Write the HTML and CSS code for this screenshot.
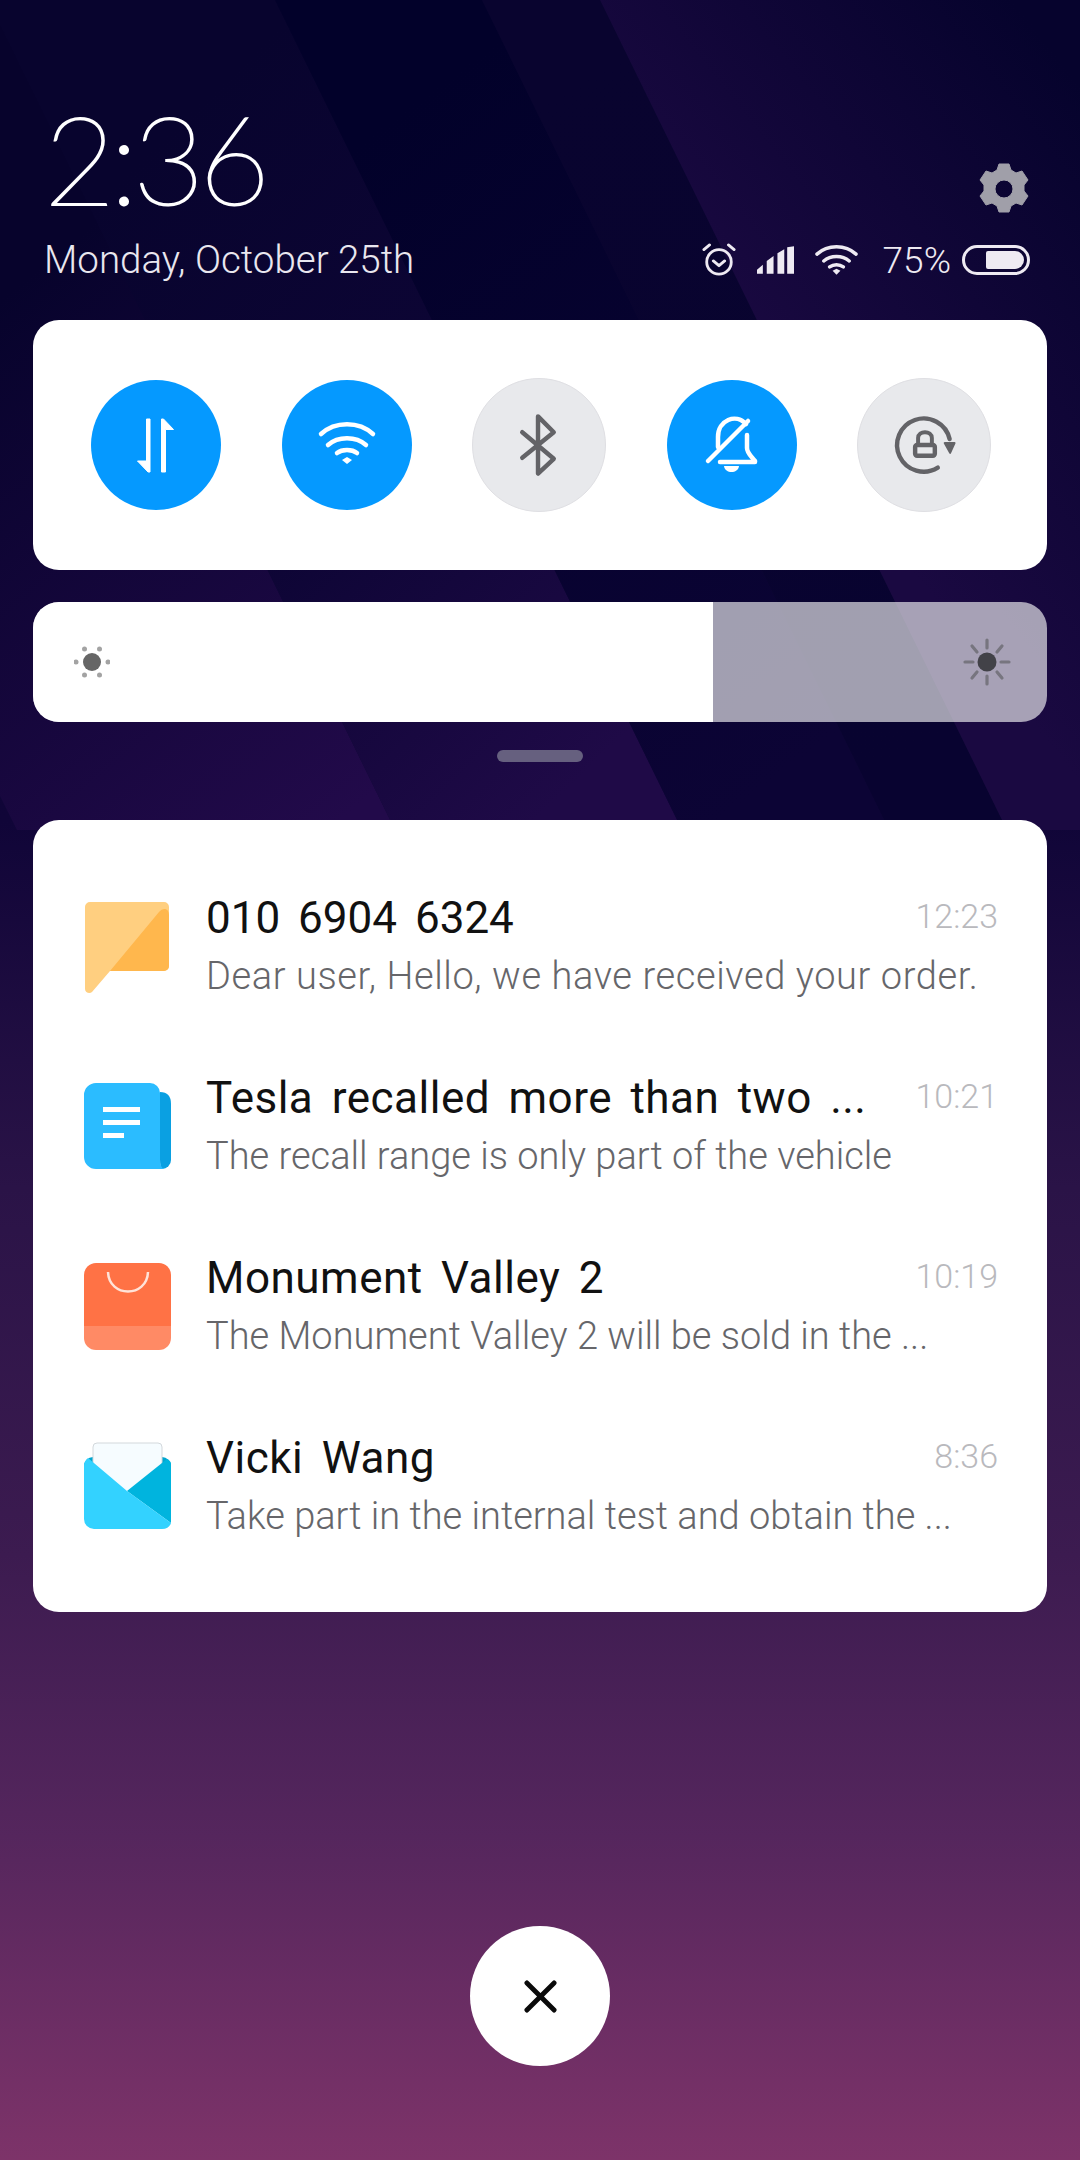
FILE: index.html
```html
<!DOCTYPE html>
<html lang="en">
<head>
  <meta charset="UTF-8">
  <title>Notification shade</title>
  <link rel="stylesheet" href="styles.css">
</head>
<body>
<div class="screen">
  <svg class="wallpaper" viewBox="0 0 1080 2160">
    <defs>
      <linearGradient id="bandOne" gradientUnits="userSpaceOnUse" x1="0" y1="300" x2="390" y2="780">
        <stop offset="0" stop-color="#07032c"/>
        <stop offset="1" stop-color="#220a4a"/>
      </linearGradient>
      <linearGradient id="bandTwo" gradientUnits="userSpaceOnUse" x1="120" y1="180" x2="640" y2="720">
        <stop offset="0" stop-color="#08042e"/>
        <stop offset="0.5" stop-color="#0d0535"/>
        <stop offset="1" stop-color="#1f0a47"/>
      </linearGradient>
      <linearGradient id="bandThree" gradientUnits="userSpaceOnUse" x1="350" y1="150" x2="800" y2="760">
        <stop offset="0" stop-color="#02012a"/>
        <stop offset="1" stop-color="#0c0435"/>
      </linearGradient>
      <linearGradient id="bandFour" gradientUnits="userSpaceOnUse" x1="540" y1="100" x2="900" y2="760">
        <stop offset="0" stop-color="#09042f"/>
        <stop offset="1" stop-color="#080330"/>
      </linearGradient>
      <linearGradient id="bandFive" gradientUnits="userSpaceOnUse" x1="720" y1="330" x2="1060" y2="60">
        <stop offset="0" stop-color="#1a0941"/>
        <stop offset="1" stop-color="#06032d"/>
      </linearGradient>
    </defs>
    <polygon points="0,24 395,830 17,830 0,796" fill="url(#bandOne)"/>
    <polygon points="-12,0 275,0 682,830 395,830" fill="url(#bandTwo)"/>
    <polygon points="275,0 482,0 889,830 682,830" fill="url(#bandThree)"/>
    <polygon points="482,0 600,0 1007,830 889,830" fill="url(#bandFour)"/>
    <polygon points="600,0 1080,0 1080,830 1007,830" fill="url(#bandFive)"/>
  </svg>

  <header class="head">
    <div class="head-left">
      <div class="clock">2:36</div>
      <div class="date">Monday, October 25th</div>
    </div>
    <div class="head-right">
      <svg class="gear" viewBox="0 0 52 52">
        <path fill="#a09fa9" fill-rule="evenodd" stroke="#a09fa9" stroke-width="1" stroke-linejoin="round" d="M21 1h10l2 6 5 3 6-2 6 9-4 5v6l4 5-6 9-6-2-5 3-2 6H21l-2-6-5-3-6 2-6-9 4-5v-6l-4-5 6-9 6 2 5-3zM26 17a9 9 0 1 0 0 18 9 9 0 0 0 0-18z"/>
      </svg>
      <div class="status">
        <svg class="st-alarm" viewBox="0 0 36 36" fill="none" stroke="#eeeaf2" stroke-width="3" stroke-linecap="round" stroke-linejoin="round">
          <circle cx="18" cy="20" r="13"/>
          <path d="M12 19l6 5 6-5M2 7l6-5M34 7l-6-5"/>
        </svg>
        <svg class="st-signal" viewBox="0 0 38 28" fill="#eeeaf2">
          <path d="M0 28v-4l6-5v9zM10 28V15l7-5v18zM21 28V7l7-4v25zM31 28V1l7-1v28z"/>
        </svg>
        <svg class="st-wifi" viewBox="0 0 44 32" fill="none" stroke="#eeeaf2" stroke-width="3.6" stroke-linecap="round">
          <path d="M2 10c11-10 29-10 40 0M9 17c7-6 19-6 26 0M15 23c4-3 10-3 14 0"/>
          <path d="M18 27l4-2 4 2-4 4z" fill="#eeeaf2" stroke="none"/>
        </svg>
        <span class="pct">75%</span>
        <div class="battery"><div class="battery-fill"></div></div>
      </div>
    </div>
  </header>

  <section class="card toggles">
    <div class="toggle on">
      <svg viewBox="0 0 130 130" fill="#fff" stroke="#fff" stroke-width="1" stroke-linejoin="round">
        <path d="M55.500 39h3.500v53h-2L46.500 81h9zM70.500 39h2l10 10.500h-8V92h-4z"/>
      </svg>
    </div>
    <div class="toggle on">
      <svg viewBox="0 0 130 130" fill="none" stroke="#fff" stroke-width="4.500" stroke-linecap="round">
        <path d="M39 54c14-13 38-13 52 0M46 65c10-9 28-9 38 0M55 73c5-4 15-4 20 0"/>
        <path d="M60 80l5-3 5 3-5 4z" fill="#fff" stroke="none"/>
      </svg>
    </div>
    <div class="toggle off">
      <svg viewBox="0 0 134 134" fill="none" stroke="#636367" stroke-width="4.500" stroke-linecap="round" stroke-linejoin="round">
        <path d="M50 54l32 27-16 15V38l16 16-32 26"/>
      </svg>
    </div>
    <div class="toggle on">
      <svg viewBox="0 0 130 130" fill="none" stroke="#fff" stroke-width="4.500" stroke-linecap="round" stroke-linejoin="round">
        <path d="M51 67V57c0-17 18-24 28-13"/>
        <path d="M80 55v13c0 5 4 8 8 13v1H53"/>
        <path d="M41 81L81 41"/>
        <path d="M57 86h15c-1 8-14 8-15 0z" fill="#fff" stroke="none"/>
      </svg>
    </div>
    <div class="toggle off">
      <svg viewBox="0 0 134 134" fill="none" stroke="#636367" stroke-width="4.500" stroke-linecap="round" stroke-linejoin="round">
        <path d="M81 90A27 27 0 1 1 93 61"/>
        <path d="M88 65h10l-4.500 10z" fill="#636367" stroke-width="2"/>
        <rect x="58" y="67" width="20" height="11" rx="2" fill="none"/>
        <path d="M61 66v-6c0-8 14-8 14 0v6" stroke-width="4"/>
      </svg>
    </div>
  </section>

  <section class="brightness">
    <div class="bright-fill">
      <svg class="sun-small" viewBox="0 0 36 36">
        <circle cx="18" cy="18" r="9" fill="#666"/>
        <g fill="#a3a3a3">
          <circle cx="2" cy="18" r="2.500"/><circle cx="34" cy="18" r="2.500"/>
          <circle cx="10.500" cy="5" r="2.500"/><circle cx="25.500" cy="5" r="2.500"/>
          <circle cx="10.500" cy="31" r="2.500"/><circle cx="25.500" cy="31" r="2.500"/>
        </g>
      </svg>
    </div>
    <svg class="sun-big" viewBox="0 0 48 48">
      <circle cx="24" cy="24" r="9.500" fill="#424248"/>
      <path stroke="#77757f" stroke-width="3.200" stroke-linecap="round" d="M24 2v8M24 38v8M2 24h8M38 24h8M9 8l5 6M39 8l-5 6M9 40l5-6M39 40l-5-6"/>
    </svg>
  </section>

  <div class="handle"></div>

  <section class="card notes">
    <div class="note">
      <svg class="app-icon" viewBox="0 0 88 88">
        <path d="M1 5a5 5 0 0 1 5-5h74a5 5 0 0 1 5 5v59a5 5 0 0 1-5 5H26L8 90c-2 2-7 1-7-3z" fill="#ffcf80"/>
        <path d="M26 69L75 10c4-5 10-4 10 3v51a5 5 0 0 1-5 5z" fill="#ffb74d"/>
      </svg>
      <div class="note-text">
        <div class="note-top"><span class="note-title digits">010 6904 6324</span><span class="note-time">12:23</span></div>
        <div class="note-body spaced">Dear user, Hello, we have received your order.</div>
      </div>
    </div>
    <div class="note">
      <svg class="app-icon" viewBox="0 0 88 88">
        <path d="M76 10Q87 10 87 22V78A9 9 0 0 1 78 87Q76 85 76 78z" fill="#0aa0e2"/>
        <path d="M0 13A12 12 0 0 1 12 1H66A10 10 0 0 1 76 11V78Q76 85 80 87H12A12 12 0 0 1 0 75z" fill="#2bbcff"/>
        <path d="M19 25h37v5H19zM19 38h37v5H19zM19 51h21v5H19z" fill="#fff"/>
      </svg>
      <div class="note-text">
        <div class="note-top"><span class="note-title">Tesla recalled more than two ...</span><span class="note-time">10:21</span></div>
        <div class="note-body">The recall range is only part of the vehicle</div>
      </div>
    </div>
    <div class="note">
      <svg class="app-icon" viewBox="0 0 88 88">
        <path d="M0 64h87v12a12 12 0 0 1-12 12H12A12 12 0 0 1 0 76z" fill="#ff8a65"/>
        <path d="M0 13A12 12 0 0 1 12 1h63a12 12 0 0 1 12 12v51H0z" fill="#ff7245"/>
        <path d="M24 10C25 36 63 36 64 10" fill="none" stroke="#ffe3d8" stroke-width="2.500"/>
      </svg>
      <div class="note-text">
        <div class="note-top"><span class="note-title">Monument Valley 2</span><span class="note-time">10:19</span></div>
        <div class="note-body">The Monument Valley 2 will be sold in the ...</div>
      </div>
    </div>
    <div class="note">
      <svg class="app-icon" viewBox="0 0 88 88">
        <rect x="0" y="15" width="87" height="40" rx="9" fill="#00a5cf"/>
        <path d="M9 5a4 4 0 0 1 4-4h61a4 4 0 0 1 4 4v50H9z" fill="#f6fcff" stroke="#d3d8dc" stroke-width="1"/>
        <path d="M87 22v59L43 49 83 17q4 2 4 5z" fill="#00b4de"/>
        <path d="M0 24q0-5 4-8l39 33 44 32q-2 6-9 6H10a10 10 0 0 1-10-10z" fill="#33d2ff"/>
      </svg>
      <div class="note-text">
        <div class="note-top"><span class="note-title">Vicki Wang</span><span class="note-time">8:36</span></div>
        <div class="note-body">Take part in the internal test and obtain the ...</div>
      </div>
    </div>
  </section>

  <button class="close" aria-label="Close">
    <svg viewBox="0 0 34 34" fill="none" stroke="#0a0a0a" stroke-width="5" stroke-linecap="round"><path d="M3 3l28 28M31 3L3 31"/></svg>
  </button>
</div>
</body>
</html>
```

FILE: styles.css
```css
* {
  box-sizing: border-box;
}
html, body {
  margin: 0;
  padding: 0;
}
body {
  font-family: "Roboto", "Liberation Sans", sans-serif;
}
.screen {
  position: relative;
  width: 1080px;
  height: 2160px;
  overflow: hidden;
  padding: 0 33px;
  background: linear-gradient(180deg, #05022c 0%, #0c0532 20%, #100538 38%, #2a1347 55%, #3c1b50 72%, #55265d 85%, #7d3369 100%);
}
.wallpaper {
  position: absolute;
  left: 0;
  top: 0;
  width: 1080px;
  height: 2160px;
}
.head, .card, .brightness, .handle {
  position: relative;
}

.head {
  display: flex;
  justify-content: space-between;
  align-items: flex-end;
  height: 320px;
  padding: 0 17px 39px 11px;
}
.clock {
  font-family: "Lato", "Roboto", sans-serif;
  font-weight: 100;
  font-size: 123px;
  line-height: 110px;
  letter-spacing: -5.5px;
  color: #fff;
  -webkit-text-stroke: 2px #fff;
}
.date {
  margin-top: 26px;
  font-size: 38.5px;
  line-height: 42px;
  font-weight: 300;
  color: #e9e7ef;
}
.head-right {
  display: flex;
  flex-direction: column;
  align-items: flex-end;
  gap: 29px;
  padding-bottom: 5px;
}
.gear {
  width: 52px;
  height: 52px;
}
.status {
  display: flex;
  align-items: center;
  height: 32px;
}
.st-alarm {
  width: 34px;
  height: 34px;
}
.st-signal {
  width: 37px;
  height: 28px;
  margin-left: 21px;
}
.st-wifi {
  width: 43px;
  height: 32px;
  margin-left: 21px;
}
.pct {
  margin-left: 25px;
  font-size: 37px;
  font-weight: 300;
  color: #eeeaf2;
}
.battery {
  width: 68px;
  height: 30px;
  margin-left: 11px;
  border: 3px solid #eeeaf2;
  border-radius: 15px;
  padding: 3px;
  display: flex;
  justify-content: flex-end;
}
.battery-fill {
  width: 38px;
  height: 18px;
  background: #eeeaf2;
  border-radius: 2px 9px 9px 2px;
}

.card {
  background: #fff;
  border-radius: 26px;
}
.toggles {
  display: flex;
  justify-content: space-between;
  align-items: center;
  height: 250px;
  padding: 0 56px 0 58px;
}
.toggle {
  width: 130px;
  height: 130px;
  border-radius: 50%;
  flex: none;
}
.toggle svg {
  display: block;
  width: 100%;
  height: 100%;
}
.toggle.on {
  background: #0599ff;
}
.toggle.off {
  width: 134px;
  height: 134px;
  background: #e8e9ec;
  border: 1px solid #dfdfe3;
}

.brightness {
  display: flex;
  align-items: center;
  margin-top: 32px;
  height: 120px;
  border-radius: 26px;
  background: rgba(255, 255, 255, 0.62);
  overflow: hidden;
}
.bright-fill {
  width: 680px;
  height: 100%;
  background: #fff;
  display: flex;
  align-items: center;
  padding-left: 41px;
}
.sun-small {
  width: 36px;
  height: 36px;
}
.sun-big {
  width: 48px;
  height: 48px;
  margin-left: 250px;
}

.handle {
  width: 86px;
  height: 12px;
  margin: 28px auto 0;
  border-radius: 6px;
  background: #66607f;
}

.notes {
  margin-top: 58px;
  height: 792px;
  padding: 36px 49px 0 51px;
}
.note {
  display: flex;
  align-items: center;
  height: 180px;
}
.app-icon {
  width: 88px;
  height: 88px;
  flex: none;
  overflow: visible;
}
.note-text {
  flex: 1;
  margin-left: 34px;
  min-width: 0;
}
.note-top {
  display: flex;
  justify-content: space-between;
  align-items: flex-start;
  height: 50px;
}
.note-title {
  font-size: 44px;
  line-height: 50px;
  color: #111;
  word-spacing: 7px;
  letter-spacing: 0.5px;
}
.note-title.digits {
  letter-spacing: 0;
}
.note-time {
  font-size: 34px;
  line-height: 46px;
  font-weight: 300;
  color: #b9b9bd;
}
.note-body {
  margin-top: 10px;
  font-size: 38px;
  line-height: 46px;
  font-weight: 300;
  color: #66666a;
  white-space: nowrap;
}
.note-body.spaced {
  letter-spacing: 0.6px;
}

.close {
  position: absolute;
  left: 470px;
  top: 1926px;
  width: 140px;
  height: 140px;
  padding: 0;
  border: none;
  border-radius: 50%;
  background: #fff;
  display: flex;
  align-items: center;
  justify-content: center;
}
.close svg {
  width: 33px;
  height: 33px;
}
```
